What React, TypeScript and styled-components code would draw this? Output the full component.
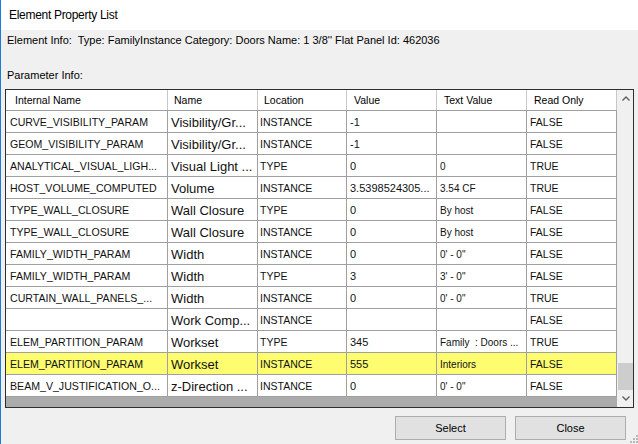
import React from "react";
import styled, { createGlobalStyle } from "styled-components";

const GlobalStyle = createGlobalStyle`
  html, body {
    margin: 0;
    padding: 0;
    background: #f0f0f0;
  }
  body {
    font-family: "Liberation Sans", Arial, sans-serif;
    color: #000;
  }
`;

const COLUMNS = "162px 90px 89px 90px 90px 90px";

const StyledWindow = styled.div`
  width: 638px;
  height: 444px;
  box-sizing: border-box;
  border-left: 1px solid #1c7bd6;
  display: flex;
  flex-direction: column;
  overflow: hidden;
`;

const StyledTitleBar = styled.div`
  height: 30px;
  background: #fff;
  display: flex;
  align-items: center;
  padding-left: 8px;
  font-size: 12px;
  letter-spacing: -0.3px;
`;

const StyledBody = styled.div`
  flex: 1;
  display: flex;
  flex-direction: column;
  padding: 0 4px;
`;

const StyledLabel = styled.div<{ $top: number }>`
  margin-top: ${({ $top }) => $top}px;
  height: 14px;
  line-height: 14px;
  font-size: 11px;
  padding-left: 2px;
  white-space: pre;
`;

const StyledGridBox = styled.div`
  margin-top: 7px;
  height: 319px;
  box-sizing: border-box;
  border: 1px solid #2e2e2e;
  display: flex;
`;

const StyledGrid = styled.div`
  width: 611px;
  display: flex;
  flex-direction: column;
  background: #ababab;
`;

const StyledRow = styled.div<{ $header?: boolean; $highlight?: boolean }>`
  display: grid;
  grid-template-columns: ${COLUMNS};
  height: ${({ $header }) => ($header ? 21 : 22)}px;
  box-sizing: border-box;
  border-bottom: 1px solid #a0a0a0;
  background: ${({ $highlight }) => ($highlight ? "#fdfd6f" : "#fff")};
`;

const StyledHeadCell = styled.div<{ $pad: number }>`
  display: flex;
  align-items: center;
  padding-left: ${({ $pad }) => $pad}px;
  border-right: 1px solid #c8c8c8;
  font-size: 10.5px;
  white-space: nowrap;
  overflow: hidden;
`;

const StyledCell = styled.div<{ $size: number; $pad: number }>`
  display: flex;
  align-items: center;
  padding-left: ${({ $pad }) => $pad}px;
  padding-top: 1px;
  border-right: 1px solid #a0a0a0;
  font-size: ${({ $size }) => $size}px;
  white-space: pre;
  overflow: hidden;
  color: #111;
`;

const StyledScrollbar = styled.div`
  width: 16px;
  display: flex;
  flex-direction: column;
  background: #f0f0f0;
  border-left: 1px solid #f0f0f0;
`;

const StyledArrow = styled.div`
  height: 17px;
  display: flex;
  align-items: center;
  justify-content: center;
`;

const StyledTrack = styled.div`
  flex: 1;
  display: flex;
  flex-direction: column;
  justify-content: flex-end;
`;

const StyledThumb = styled.div`
  height: 27px;
  background: #cdcdcd;
`;

const StyledButtonRow = styled.div`
  margin-top: 8px;
  display: flex;
  justify-content: flex-end;
  align-items: flex-start;
  gap: 9px;
`;

const StyledButton = styled.button`
  width: 111px;
  height: 24px;
  box-sizing: border-box;
  background: #e1e1e1;
  border: 1px solid #adadad;
  font-family: "Liberation Sans", Arial, sans-serif;
  font-size: 11px;
  color: #000;
  padding: 0;
`;

const StyledGrip = styled.div`
  width: 9px;
  height: 27px;
  display: flex;
  align-items: flex-end;
  margin-left: -6px;
  margin-right: -4px;
`;

type Row = [string, string, string, string, string, string];

const rows: Row[] = [
  ["CURVE_VISIBILITY_PARAM", "Visibility/Gr...", "INSTANCE", "-1", "", "FALSE"],
  ["GEOM_VISIBILITY_PARAM", "Visibility/Gr...", "INSTANCE", "-1", "", "FALSE"],
  ["ANALYTICAL_VISUAL_LIGH...", "Visual Light ...", "TYPE", "0", "0", "TRUE"],
  ["HOST_VOLUME_COMPUTED", "Volume", "INSTANCE", "3.5398524305...", "3.54 CF", "TRUE"],
  ["TYPE_WALL_CLOSURE", "Wall Closure", "TYPE", "0", "By host", "FALSE"],
  ["TYPE_WALL_CLOSURE", "Wall Closure", "INSTANCE", "0", "By host", "FALSE"],
  ["FAMILY_WIDTH_PARAM", "Width", "INSTANCE", "0", "0' - 0\"", "FALSE"],
  ["FAMILY_WIDTH_PARAM", "Width", "TYPE", "3", "3' - 0\"", "FALSE"],
  ["CURTAIN_WALL_PANELS_...", "Width", "INSTANCE", "0", "0' - 0\"", "TRUE"],
  ["", "Work Comp...", "INSTANCE", "", "", "FALSE"],
  ["ELEM_PARTITION_PARAM", "Workset", "TYPE", "345", "Family  : Doors ...", "TRUE"],
  ["ELEM_PARTITION_PARAM", "Workset", "INSTANCE", "555", "Interiors", "FALSE"],
  ["BEAM_V_JUSTIFICATION_O...", "z-Direction ...", "INSTANCE", "0", "0' - 0\"", "FALSE"],
];

const headers: [string, number][] = [
  ["Internal Name", 9],
  ["Name", 6],
  ["Location", 6],
  ["Value", 7],
  ["Text Value", 7],
  ["Read Only", 7],
];

const cellSizes = [10.6, 13, 10.5, 11, 10, 10.5];
const cellPads = [4, 3, 2, 3, 3, 3];

const Chevron = ({ down }: { down?: boolean }) => (
  <svg width="8" height="5" viewBox="0 0 8 5">
    <path
      d={down ? "M0.5 0.5 L4 4 L7.5 0.5" : "M0.5 4.5 L4 1 L7.5 4.5"}
      fill="none"
      stroke="#606060"
      strokeWidth="1.4"
    />
  </svg>
);

const Grip = () => (
  <svg width="9" height="9" viewBox="0 0 9 9">
    {[
      [7, 1],
      [4, 4],
      [7, 4],
      [1, 7],
      [4, 7],
      [7, 7],
    ].map(([x, y]) => (
      <rect key={`${x}-${y}`} x={x} y={y} width="2" height="2" fill="#b8b8b8" />
    ))}
  </svg>
);

const App = () => {
  return (
    <StyledWindow>
      <GlobalStyle />
      <StyledTitleBar>Element Property List</StyledTitleBar>
      <StyledBody>
        <StyledLabel $top={3}>
          {"Element Info:  Type: FamilyInstance Category: Doors Name: 1 3/8'' Flat Panel Id: 462036"}
        </StyledLabel>
        <StyledLabel $top={21}>Parameter Info:</StyledLabel>
        <StyledGridBox>
          <StyledGrid>
            <StyledRow $header>
              {headers.map(([label, pad]) => (
                <StyledHeadCell key={label} $pad={pad}>
                  {label}
                </StyledHeadCell>
              ))}
            </StyledRow>
            {rows.map((row, i) => (
              <StyledRow key={i} $highlight={i === 11}>
                {row.map((value, j) => (
                  <StyledCell key={j} $size={cellSizes[j]} $pad={cellPads[j]}>
                    {value}
                  </StyledCell>
                ))}
              </StyledRow>
            ))}
          </StyledGrid>
          <StyledScrollbar>
            <StyledArrow>
              <Chevron />
            </StyledArrow>
            <StyledTrack>
              <StyledThumb />
            </StyledTrack>
            <StyledArrow>
              <Chevron down />
            </StyledArrow>
          </StyledScrollbar>
        </StyledGridBox>
        <StyledButtonRow>
          <StyledButton>Select</StyledButton>
          <StyledButton>Close</StyledButton>
          <StyledGrip>
            <Grip />
          </StyledGrip>
        </StyledButtonRow>
      </StyledBody>
    </StyledWindow>
  );
};

export default App;
